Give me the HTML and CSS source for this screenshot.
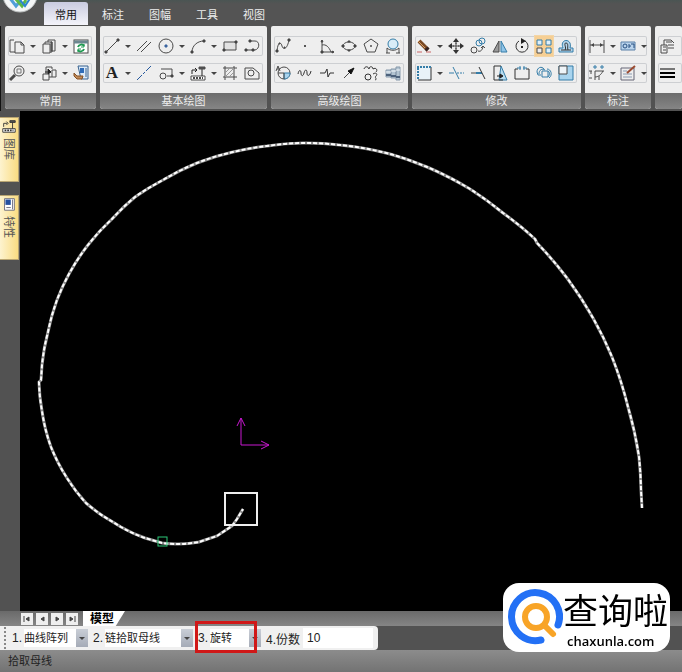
FILE: index.html
```
<!DOCTYPE html>
<html lang="zh-CN">

<head>
    <meta charset="UTF-8">
    <title>CAXA 电子图板</title>
    <link rel="stylesheet" href="styles.css">
</head>

<body>

    <header>
        <button class="logo" aria-label="菜单">
            <svg viewBox="0 0 36 36">
                <circle cx="18" cy="18" r="17" fill="#f4f6f6" stroke="#b9bcbc" />
                <path d="M7 20l7 9 5-6" stroke="#4f9fd8" stroke-width="3" fill="none" />
                <path d="M12 20l8 9 4-6" stroke="#5cb947" stroke-width="3" fill="none" />
                <path d="M18 23l5 6 6-9" stroke="#2c86cf" stroke-width="2" fill="none" />
            </svg>
        </button>
        <nav>
            <button class="tab valgt">常用</button>
            <button class="tab">标注</button>
            <button class="tab">图幅</button>
            <button class="tab">工具</button>
            <button class="tab">视图</button>
        </nav>
    </header>

    <section id="ribbon">

        <article class="panel common">
            <div class="rows">
                <div class="row">
                    <button class="tool" aria-label="复制"><svg viewBox="0 0 18 18"><path d="M7 15H2V3h4M7 5h6l3 3v8H7zM13 5v3h3" /></svg></button>
                    <button class="caret" aria-label="更多"></button>
                    <button class="tool" aria-label="粘贴"><svg viewBox="0 0 18 18"><path d="M3 7h7v9H3zM5 7V5h7v10h-2M8 5V3h7v11h-3" /><path d="M11 5h1v9h-1z" fill="#777" /></svg></button>
                    <button class="caret" aria-label="更多"></button>
                    <button class="tool" aria-label="刷新"><svg viewBox="0 0 18 18"><rect x="2" y="3" width="14" height="13" fill="#fff" /><path d="M2 5h14" stroke="#6c8790" stroke-width="3" /><path d="M6 10c1-3 5-3 6-1M12 12c-1 3-5 3-6 1" stroke="#1f9a52" stroke-width="2" /><path d="M12 7v3H9M6 15v-3h3" stroke="#1f9a52" /></svg></button>
                </div>
                <div class="row">
                    <button class="tool" aria-label="缩放"><svg viewBox="0 0 18 18"><circle cx="11" cy="7" r="5" /><path d="M9 5h4v4H9z" stroke="#777" /><path d="M7 11l-5 5" stroke-width="3" /></svg></button>
                    <button class="caret" aria-label="更多"></button>
                    <button class="tool" aria-label="格式"><svg viewBox="0 0 18 18"><path d="M3 10h6v6H3zM6 10V3h6v2M9 13h7V6h-4v7" /><path d="M5 8h5M8 5l3 3-3 2z" fill="#222" stroke="#222" /></svg></button>
                    <button class="caret" aria-label="更多"></button>
                    <button class="tool" aria-label="特性匹配"><svg viewBox="0 0 18 18"><path d="M6 2h10v13H9z" fill="#dceaf8" stroke="#38638f" /><path d="M8 4h4v5H8z" fill="#2f6cb8" stroke="none" /><path d="M14 4v9" stroke="#38638f" /><path d="M2 9l3 3h6l-1 3H5l-3-3z" fill="#c08a58" stroke="#855124" /></svg></button>
                </div>
            </div>
            <h2>常用</h2>
        </article>

        <article class="panel basic">
            <div class="rows">
                <div class="row">
                    <button class="tool" aria-label="直线"><svg viewBox="0 0 18 18"><path d="M3 15L15 3" /><path d="M2 14h2v2H2zM14 2h2v2h-2z" fill="#333" /></svg></button>
                    <button class="caret" aria-label="更多"></button>
                    <button class="tool" aria-label="平行线"><svg viewBox="0 0 18 18"><path d="M2 14L12 4M6 15L16 5" /></svg></button>
                    <button class="tool" aria-label="圆"><svg viewBox="0 0 18 18"><circle cx="9" cy="9" r="7" /><path d="M8 8h2v2H8z" fill="#3a65a0" stroke="#3a65a0" /></svg></button>
                    <button class="caret" aria-label="更多"></button>
                    <button class="tool" aria-label="圆弧"><svg viewBox="0 0 18 18"><path d="M3 15C3 9 8 4 15 4" /><path d="M2 14h2v2H2zM14 3h2v2h-2z" fill="#333" /></svg></button>
                    <button class="caret" aria-label="更多"></button>
                    <button class="tool" aria-label="矩形"><svg viewBox="0 0 18 18"><path d="M3 5h12v8H3z" fill="#e2e2e2" /><path d="M2 12h2v2H2zM14 4h2v2h-2z" fill="#333" /></svg></button>
                    <button class="tool" aria-label="多段线"><svg viewBox="0 0 18 18"><path d="M3 13h7M7 4h5c5 0 5 8 0 9h-2" /><path d="M2 12h2v2H2zM6 3h2v2H6zM9 12h2v2H9z" fill="#333" /></svg></button>
                </div>
                <div class="row">
                    <button class="tool letter" aria-label="文字">A</button>
                    <button class="caret" aria-label="更多"></button>
                    <button class="tool" aria-label="中心线"><svg viewBox="0 0 18 18"><path d="M2 16l5-5M8 10l2-2M11 7l5-5" stroke="#24589c" stroke-width="1" /></svg></button>
                    <button class="tool" aria-label="局部放大"><svg viewBox="0 0 18 18"><path d="M4 5h11v7h-5" /><circle cx="6" cy="12" r="3" /><path d="M14 11h2v2h-2z" fill="#333" /></svg></button>
                    <button class="caret" aria-label="更多"></button>
                    <button class="tool" aria-label="图库"><svg viewBox="0 0 18 18"><path d="M2 12h14v4H2z" fill="#fff" /><path d="M4 14h10" stroke-dasharray="2 1" stroke-width="2" /><path d="M3 10V6h4M6 4l2 2-2 2M10 4h6M13 4v8" stroke="#222" /><path d="M10 3h6v2h-6z" fill="#555" /></svg></button>
                    <button class="caret" aria-label="更多"></button>
                    <button class="tool" aria-label="剖面线"><svg viewBox="0 0 18 18"><path d="M4 2v14M13 2v14M2 4h14M2 13h14" /><path d="M4 9l5-5M4 13l9-9M8 13l5-5" stroke="#999" /></svg></button>
                    <button class="tool" aria-label="填充"><svg viewBox="0 0 18 18"><path d="M2 4h8l6 5v6H2z" /><circle cx="8" cy="9" r="3" /></svg></button>
                </div>
            </div>
            <h2>基本绘图</h2>
        </article>

        <article class="panel advanced">
            <div class="rows">
                <div class="row">
                    <button class="tool" aria-label="样条"><svg viewBox="0 0 18 18"><path d="M3 14C4 4 7 5 8 9s5 4 7-6" /><path d="M2 13h2v2H2zM14 2h2v2h-2zM5 6h1v1H5zM10 10h1v1h-1z" fill="#333" /></svg></button>
                    <button class="tool" aria-label="点"><svg viewBox="0 0 18 18"><path d="M8 8h2v2H8z" fill="#555" stroke="none" /></svg></button>
                    <button class="tool" aria-label="公式曲线"><svg viewBox="0 0 18 18"><path d="M4 3v12h12M4 8c4-1 7 2 9 7" /><path d="M3 5l1-2 1 2zM14 14l2 1-2 1zM3 14h2v2H3z" fill="#333" /></svg></button>
                    <button class="tool" aria-label="椭圆"><svg viewBox="0 0 18 18"><ellipse cx="9" cy="9" rx="6" ry="4" /><path d="M2 8h2v2H2zM14 8h2v2h-2zM8 4h2v1H8zM8 13h2v1H8z" fill="#333" /></svg></button>
                    <button class="tool" aria-label="多边形"><svg viewBox="0 0 18 18"><path d="M9 2l7 5-3 8H5L2 7z" /><path d="M8 8h2v2H8z" fill="#777" stroke="none" /></svg></button>
                    <button class="tool" aria-label="圆弧拟合"><svg viewBox="0 0 18 18"><circle cx="9" cy="7" r="5" stroke="#357da8" fill="#d9edf8" /><path d="M3 16v-5c3 3 9 3 12 0v5M2 16h4M12 16h4" /></svg></button>
                </div>
                <div class="row">
                    <button class="tool" aria-label="局部视图"><svg viewBox="0 0 18 18"><circle cx="10" cy="9" r="6" /><path d="M10 9h6c0 4-3 6-6 6z" fill="#a9d4ee" stroke="#357da8" /><path d="M10 9v6M4 9h6M2 7l2-5 2 5M3 5h3" /></svg></button>
                    <button class="tool" aria-label="波浪线"><svg viewBox="0 0 18 18"><path d="M2 10c1-5 3-4 3-1s2 4 3 0 3-4 3 0 3 3 4-2" stroke="#333" /></svg></button>
                    <button class="tool" aria-label="双折线"><svg viewBox="0 0 18 18"><path d="M2 9h5l2-4 1 8 2-4h4" stroke="#333" /></svg></button>
                    <button class="tool" aria-label="箭头"><svg viewBox="0 0 18 18"><path d="M4 14l6-6" /><path d="M8 7l6-3-3 6z" fill="#111" stroke="#111" /></svg></button>
                    <button class="tool" aria-label="齿轮"><svg viewBox="0 0 18 18"><path d="M2 5c1-3 4-3 5 0 0-3 4-3 4 0 3-2 5 1 3 3M11 10c3-2 5 0 3 2s2 3-1 4" stroke="#333" /><circle cx="6" cy="13" r="3" stroke="#333" /></svg></button>
                    <button class="tool" aria-label="孔轴"><svg viewBox="0 0 18 18"><path d="M2 6h5v7H2zM7 5h5v9H7zM12 3h4v13h-4z" fill="#b3c4d2" stroke="#8799ab" /><path d="M2 8h5M7 7h5M12 6h4" stroke="#f3f8fc" /><path d="M2 11h5M7 12h5M12 13h4" stroke="#4d627c" stroke-width="2" /></svg></button>
                </div>
            </div>
            <h2>高级绘图</h2>
        </article>

        <article class="panel modify">
            <div class="rows">
                <div class="row">
                    <button class="tool" aria-label="删除"><svg viewBox="0 0 18 18"><path d="M2 15h5M11 15h5" stroke="#c66" /><path d="M4 4l9 9" stroke="#7b4a25" stroke-width="4" /><path d="M3 4l7 7" stroke="#d9a066" stroke-width="1" /><path d="M11 11l2 2" stroke="#322" stroke-width="4" /></svg></button>
                    <button class="caret" aria-label="更多"></button>
                    <button class="tool" aria-label="平移"><svg viewBox="0 0 18 18"><path d="M9 3v12M3 9h12" stroke="#333" /><path d="M9 1l3 4H6zM9 17l3-4H6zM1 9l4-3v6zM17 9l-4-3v6z" fill="#333" stroke="none" /><path d="M7 7h4v4H7z" fill="#eee" stroke="none" /><path d="M9 6v6M6 9h6" /></svg></button>
                    <button class="tool" aria-label="平移复制"><svg viewBox="0 0 18 18"><circle cx="10" cy="6" r="3" class="blue" /><circle cx="13" cy="4" r="3" class="blue" /><circle cx="5" cy="13" r="3" /><path d="M9 14c3 1 4-1 5-4M12 11l2-2 2 2" /></svg></button>
                    <button class="tool" aria-label="镜像"><svg viewBox="0 0 18 18"><path d="M8 4v11H2z" fill="#999" /><path d="M10 4v11h6z" fill="#8fc4e8" class="blue" /></svg></button>
                    <button class="tool" aria-label="旋转"><svg viewBox="0 0 18 18"><path d="M6 4a6 6 0 1 0 6 0" stroke="#333" /><path d="M8 1l5 3-5 3z" fill="#222" stroke="none" /><path d="M8 9h2v2H8z" fill="#222" stroke="none" /></svg></button>
                    <button class="tool aktiv" aria-label="阵列"><svg viewBox="0 0 18 18"><path d="M2 3h5v5H2zM11 3h5v5h-5zM11 11h5v5h-5z" class="blue" fill="#dff0fa" /><path d="M2 11h5v5H2z" fill="#eee" /></svg></button>
                    <button class="tool" aria-label="等距线"><svg viewBox="0 0 18 18"><path d="M2 15v-4h4C2 1 16 1 13 11h3v4z" class="blue" fill="#b4d5ec" /><path d="M4 13h10M8 13c2-2-2-7 1-7s1 5 2 7" stroke="#333" /></svg></button>
                </div>
                <div class="row">
                    <button class="tool" aria-label="拉伸"><svg viewBox="0 0 18 18"><path d="M3 3h13v13H3z" fill="#e9f2f8" stroke="none" /><path d="M3 16h13V3" stroke="#333" /><path d="M2 3h14M3 4v12" stroke="#357da8" stroke-width="2" stroke-dasharray="2 1" /></svg></button>
                    <button class="caret" aria-label="更多"></button>
                    <button class="tool" aria-label="裁剪"><svg viewBox="0 0 18 18"><path d="M2 9h5M6 3l6 12" class="blue" /><path d="M10 9h7" stroke-dasharray="2 1" class="blue" /></svg></button>
                    <button class="tool" aria-label="延伸"><svg viewBox="0 0 18 18"><path d="M2 9h5" /><path d="M7 9h6" class="blue" stroke-width="2" /><path d="M10 3l6 12" stroke="#333" /></svg></button>
                    <button class="tool" aria-label="拉伸面"><svg viewBox="0 0 18 18"><path d="M10 2l6 14H8z" fill="#b8dcf0" class="blue" /><path d="M10 2H3v14h9" stroke="#333" /><path d="M6 12h5M9 10l3 2-3 2z" fill="#222" stroke="#222" /></svg></button>
                    <button class="tool" aria-label="打断"><svg viewBox="0 0 18 18"><path d="M5 5H2v10h14V5h-3" stroke="#333" /><path d="M4 4h4M10 4h4M7 2v4M11 2v4" class="blue" /></svg></button>
                    <button class="tool" aria-label="缩放图形"><svg viewBox="0 0 18 18"><path d="M7 7h6v6H7zM2 8c0-5 5-6 7-3M4 10c0-4 3-6 6-4M12 5c4 0 6 6 2 9M13 7c2 1 2 4 0 6M2 8l1 3h3" class="blue" /></svg></button>
                    <button class="tool" aria-label="比例"><svg viewBox="0 0 18 18"><path d="M2 2h14v14H2z" fill="#a9d4ee" class="blue" /><path d="M2 2h8v8H2z" fill="#eef4f8" /></svg></button>
                </div>
            </div>
            <h2>修改</h2>
        </article>

        <article class="panel mark">
            <div class="rows">
                <div class="row">
                    <button class="tool" aria-label="尺寸标注"><svg viewBox="0 0 18 18"><path d="M2 3v13M16 3v13M2 8h14" /><path d="M3 8l3-2v4zM15 8l-3-2v4z" fill="#444" stroke="none" /></svg></button>
                    <button class="caret" aria-label="更多"></button>
                    <button class="tool" aria-label="形位公差"><svg viewBox="0 0 18 18"><path d="M2 5h14v8H2z" fill="#b9d3ec" stroke="#5b80a8" /><circle cx="6" cy="9" r="2" stroke="#274f80" /><path d="M10 7v4M12 7h3v4M10 9h2" stroke="#274f80" /></svg></button>
                    <button class="caret" aria-label="更多"></button>
                </div>
                <div class="row">
                    <button class="tool" aria-label="坐标标注"><svg viewBox="0 0 18 18"><path d="M7 7h9M7 7v9M7 13c3 0 6-2 8-6M11 12v4M1 7h3M3 7v3M1 14h3" /><path d="M6 2h2v2H6zM13 2h2v2h-2z" stroke="#357da8" /></svg></button>
                    <button class="caret" aria-label="更多"></button>
                    <button class="tool" aria-label="标注编辑"><svg viewBox="0 0 18 18"><path d="M2 4h13v12H2z" fill="#eee" stroke="#667" /><path d="M4 7h4M4 10h9M4 13h9" stroke="#8a9ab0" /><path d="M8 9l8-7" stroke="#9a4a30" stroke-width="2" /></svg></button>
                    <button class="caret" aria-label="更多"></button>
                </div>
            </div>
            <h2>标注</h2>
        </article>

        <article class="panel more">
            <div class="rows">
                <div class="row">
                    <button class="tool" aria-label="图层"><svg viewBox="0 0 18 18"><path d="M3 8h6v8H3zM5 10h3M5 13h3M6 8V3h7l3 3M8 5h6M10 8h6M10 11h6" /></svg></button>
                </div>
                <div class="row">
                    <button class="tool" aria-label="线宽"><svg viewBox="0 0 18 18"><path d="M2 5h15" stroke="#000" /><path d="M2 9h15" stroke="#000" stroke-width="2" /><path d="M2 13h15" stroke="#000" stroke-width="2" /></svg></button>
                </div>
            </div>
            <h2></h2>
        </article>

    </section>

    <main>
        <aside>
            <button class="sidetab">
                <svg viewBox="0 0 18 18"><path d="M2 12h14v4H2z" fill="#fff" /><path d="M4 14h10" stroke-dasharray="2 1" stroke-width="2" /><path d="M3 10V6h4M6 4l2 2-2 2M13 4v8" /><path d="M10 3h6v2h-6z" fill="#555" /></svg>
                <span>图库</span>
            </button>
            <button class="sidetab">
                <svg viewBox="0 0 18 18"><path d="M4 3h11v13H4z" fill="#fff" stroke="#667" /><path d="M5 4h6v6H5z" fill="#2450a0" stroke="none" /><path d="M13 4v11M6 13h5" stroke="#667" /></svg>
                <span>特性</span>
            </button>
        </aside>

        <svg id="canvas" viewBox="20 111 662 500" role="img" aria-label="绘图区">
            <defs>
                <path id="curve" d="M642 508L641 490A380 380 0 0 0 639 457A380 380 0 0 0 628 407A380 380 0 0 0 612 357A380 380 0 0 0 593 318A380 380 0 0 0 567 278A380 380 0 0 0 537 243L535 239A340 340 0 0 0 503 213A340 340 0 0 0 470 189A340 340 0 0 0 427 167A320 320 0 0 0 390 154A300 300 0 0 0 340 145A280 280 0 0 0 303 143A260 260 0 0 0 267 146A260 260 0 0 0 233 152A250 250 0 0 0 197 163A240 240 0 0 0 163 180A240 240 0 0 0 135 197A230 230 0 0 0 112 219A220 220 0 0 0 88 245A210 210 0 0 0 69 274A210 210 0 0 0 57 300A210 210 0 0 0 48 332A210 210 0 0 0 42 365L41 380L39 382A180 180 0 0 0 42 411A180 180 0 0 0 51 447A180 180 0 0 0 67 478A170 170 0 0 0 86 503A170 170 0 0 0 103 516L121 527A140 140 0 0 0 145 538L162 543A120 120 0 0 0 178 544A120 120 0 0 0 199 542L217 536L232 526L237 519L243 509" />
            </defs>
            <use class="base" href="#curve" />
            <use class="dash" href="#curve" />
            <path class="axis" d="M241 445V418M237 426l4-8 4 8M241 445H269M261 441l8 4-8 4" />
            <rect class="pickbox" x="225" y="493" width="32" height="32" />
            <rect class="snap" x="158" y="537" width="9" height="9" />
        </svg>
    </main>

    <section id="sheets">
        <button class="nav" aria-label="第一页"><svg viewBox="0 0 12 12"><path d="M3 3v6M5 6l3-2v4z" /></svg></button>
        <button class="nav" aria-label="上一页"><svg viewBox="0 0 12 12"><path d="M5 6l3-2v4z" /></svg></button>
        <button class="nav" aria-label="下一页"><svg viewBox="0 0 12 12"><path d="M8 6L5 4v4z" /></svg></button>
        <button class="nav" aria-label="最后一页"><svg viewBox="0 0 12 12"><path d="M9 3v6M7 6L4 4v4z" /></svg></button>
        <button class="sheet">模型</button>
    </section>

    <section id="options">
        <form>
            <div class="field">
                <label for="mode">1.</label>
                <span class="drop mode"><select id="mode"><option>曲线阵列</option></select></span>
            </div>
            <div class="field">
                <label for="pick">2.</label>
                <span class="drop pick"><select id="pick"><option>链拾取母线</option></select></span>
            </div>
            <div class="field marked">
                <label for="turn">3.</label>
                <span class="drop turn"><select id="turn"><option>旋转</option></select></span>
            </div>
            <div class="field">
                <label for="count" class="long">4.份数</label>
                <input id="count" type="text" value="10">
            </div>
        </form>
    </section>

    <footer>拾取母线</footer>

    <section id="watermark">
        <svg viewBox="0 0 60 60">
            <path d="M55 37A24 24 0 1 0 38 52" fill="none" stroke="#2370f5" stroke-width="7" stroke-linecap="round" />
            <circle cx="33" cy="29" r="11" fill="none" stroke="#f8a427" stroke-width="6" />
            <path d="M42 38l8 8" stroke="#f8a427" stroke-width="6" stroke-linecap="round" />
        </svg>
        <div>
            <p class="navn">查询啦</p>
            <p class="link">chaxunla.com</p>
        </div>
    </section>

</body>

</html>
```
FILE: styles.css
```
*,
*::before,
*::after {
    box-sizing: border-box;
}

body {
    margin: 0;
    height: 100vh;
    display: flex;
    flex-direction: column;
    overflow: hidden;
    background-color: #525252;
    font-family: "Liberation Sans", "Noto Sans CJK SC", sans-serif;
    font-size: 11px;
    color: #222;
}

button,
select,
input {
    margin: 0;
    padding: 0;
    border: 0;
    background: none;
    font: inherit;
    color: inherit;
}

h2,
p {
    margin: 0;
}

svg {
    display: block;
}

/* top tabs */

header {
    display: flex;
    height: 26px;
    flex: none;
    background-image: linear-gradient(#4a5553, #545454 4px);
}

.logo {
    width: 36px;
    height: 36px;
    margin: -23px 6px 0 2px;
}

nav {
    display: flex;
    gap: 3px;
    padding-top: 2px;
}

.tab {
    width: 44px;
    height: 23px;
    color: #eee;
}

.valgt {
    color: #111;
    background-image: linear-gradient(#c9cbe0, #f4f4fa);
    border-radius: 3px 3px 0 0;
}

/* ribbon */

#ribbon {
    display: flex;
    flex: none;
    gap: 4px;
    padding: 0 0 2px 4px;
    border-left: 1px solid #111;
    overflow: hidden;
}

.panel {
    flex: none;
    border-radius: 2px 2px 3px 3px;
    overflow: hidden;
    background-color: #eee;
}

.common {
    width: 91px;
}

.basic {
    width: 167px;
}

.advanced {
    width: 137px;
}

.modify {
    width: 169px;
}

.mark {
    width: 66px;
}

.more {
    flex: 1;
}

.rows {
    display: flex;
    flex-direction: column;
    gap: 7px;
    padding: 10px 4px 10px 3px;
}

.more .rows {
    padding-right: 0;
}

.panel h2 {
    height: 16px;
    line-height: 16px;
    font-size: 11px;
    font-weight: normal;
    text-align: center;
    color: #eee;
    background-image: linear-gradient(#6c6c6c, #858585);
}

.row {
    display: flex;
    align-items: center;
    height: 20px;
    border-radius: 2px;
    box-shadow: inset 0 0 0 1px #cdcfd2;
}

.tool {
    flex: none;
    width: 18px;
    height: 20px;
    margin-right: 4px;
}

.tool svg {
    width: 18px;
    height: 18px;
    fill: none;
    stroke: #4a4a4a;
}

.tool .blue {
    stroke: #357da8;
}

.letter {
    font-family: "Liberation Serif", serif;
    font-size: 17px;
    font-weight: bold;
    line-height: 20px;
    color: #222;
}

.aktiv {
    background-color: #f6cf94;
    box-shadow: 0 0 0 1px #f3d5a6;
}

.caret {
    flex: none;
    width: 10px;
    height: 20px;
}

.caret::before {
    content: "";
    display: block;
    width: 0;
    border: 3px solid transparent;
    border-top-color: #444;
    border-bottom: 0;
}

.mark .caret {
    width: 9px;
}

/* drawing area */

main {
    display: flex;
    flex: 1;
    min-height: 0;
}

aside {
    display: flex;
    flex: none;
    flex-direction: column;
    gap: 13px;
    width: 20px;
    padding-top: 6px;
}

.sidetab {
    display: flex;
    flex-direction: column;
    align-items: center;
    gap: 4px;
    width: 19px;
    height: 65px;
    border: 1px solid #b9a572;
    border-left: 0;
    background-image: linear-gradient(90deg, #fdf3cf, #fadc82);
    color: #555;
}

.sidetab svg {
    width: 16px;
    height: 16px;
    fill: none;
    stroke: #333;
}

.sidetab span {
    writing-mode: vertical-rl;
    text-orientation: sideways;
    line-height: 16px;
}

#canvas {
    flex: 1;
    min-width: 0;
    height: 100%;
    background-color: #000;
    fill: none;
}

.base {
    stroke: #8c8c8c;
    stroke-width: 3;
}

.dash {
    stroke: #fff;
    stroke-width: 2;
    stroke-dasharray: 4 2;
}

.axis {
    stroke: #c818d0;
}

.pickbox {
    stroke: #eee;
    stroke-width: 2;
}

.snap {
    stroke: #2cc878;
}

/* sheet tabs */

#sheets {
    display: flex;
    flex: none;
    align-items: center;
    gap: 3px;
    height: 15px;
    padding-left: 21px;
    background-image: linear-gradient(#6a6a6a, #858585);
}

.nav {
    width: 12px;
    height: 12px;
    background-color: #eee;
}

.nav svg {
    fill: #444;
    stroke: #444;
}

.sheet {
    width: 42px;
    height: 15px;
    margin-left: 2px;
    padding: 2px 4px 0 0;
    line-height: 13px;
    font-size: 12px;
    font-weight: bold;
    color: #000;
    background-color: #fff;
    clip-path: polygon(0 0, 100% 0, 78% 100%, 0 100%);
}

/* option bar */

#options {
    flex: none;
    height: 24px;
}

#options form {
    display: flex;
    align-items: center;
    width: 378px;
    height: 24px;
    padding-left: 12px;
    border-radius: 0 4px 4px 0;
    background-color: #f0f0f0;
    background-image: radial-gradient(#888 1px, transparent 1px);
    background-size: 4px 4px;
    background-repeat: repeat-y;
    background-position: 3px 0;
    font-size: 12px;
}

.field {
    display: flex;
    align-items: center;
    margin-right: 5px;
}

.field label {
    width: 12px;
}

.field .long {
    width: 37px;
}

.drop {
    display: flex;
    position: relative;
}

.drop::before {
    content: "";
    position: absolute;
    right: 0;
    width: 12px;
    height: 18px;
    background-image: linear-gradient(#c9ced6, #a5abb7);
    pointer-events: none;
}

.drop::after {
    content: "";
    position: absolute;
    right: 3px;
    top: 8px;
    border: 3px solid transparent;
    border-top-color: #444;
    border-bottom: 0;
    pointer-events: none;
}

.drop select {
    width: 100%;
    height: 18px;
    background-color: #fff;
    appearance: none;
    font-size: 11px;
}

.mode {
    width: 64px;
}

.pick {
    width: 88px;
}

.turn {
    width: 51px;
}

/* the option the step is about */
.marked {
    position: relative;
}

.marked::after {
    content: "";
    position: absolute;
    left: -3px;
    top: -8px;
    width: 62px;
    height: 32px;
    border: 3px solid #d01818;
    pointer-events: none;
}

#count {
    width: 70px;
    height: 20px;
    padding-left: 4px;
    background-color: #fff;
}

footer {
    flex: none;
    height: 22px;
    padding-left: 8px;
    line-height: 22px;
    background-image: linear-gradient(#8c8c8c, #737373);
}

#watermark {
    position: fixed;
    right: 12px;
    bottom: 20px;
    display: flex;
    align-items: center;
    width: 167px;
    height: 69px;
    border-radius: 16px;
    background-color: #fff;
    color: #000;
    overflow: hidden;
}

#watermark svg {
    flex: none;
    width: 60px;
    height: 60px;
}

#watermark div {
    padding-top: 6px;
}

.navn {
    line-height: 40px;
    font-size: 35px;
    white-space: nowrap;
}

.link {
    padding-left: 4px;
    line-height: 18px;
    font-family: "Open Sans", sans-serif;
    font-size: 13px;
    font-weight: 600;
}
```
